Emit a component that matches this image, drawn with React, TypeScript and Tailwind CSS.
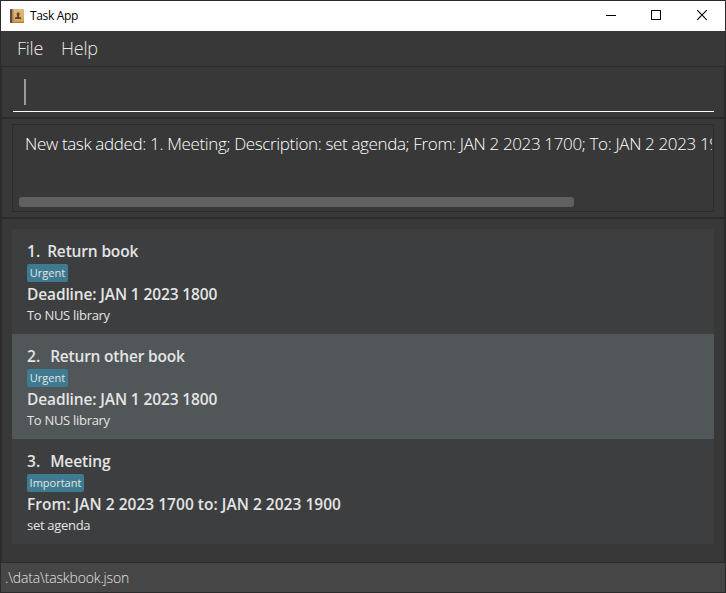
import React from "react";

type Task = {
  index: number;
  title: string;
  titleClass: string;
  tag: string;
  tagClass: string;
  time: string;
  timeClass: string;
  note: string;
  selected?: boolean;
};

const tasks: Task[] = [
  { index: 1, title: "Return book", titleClass: "ml-[7px] tracking-[-0.16px]", tag: "Urgent", tagClass: "w-[41px]", time: "Deadline: JAN 1 2023 1800", timeClass: "tracking-[-0.13px]", note: "To NUS library" },
  { index: 2, title: "Return other book", titleClass: "ml-[10px] tracking-[-0.2px]", tag: "Urgent", tagClass: "w-[41px]", time: "Deadline: JAN 1 2023 1800", timeClass: "tracking-[-0.13px]", note: "To NUS library", selected: true },
  { index: 3, title: "Meeting", titleClass: "ml-[10px] tracking-[-0.1px]", tag: "Important", tagClass: "w-[57px]", time: "From: JAN 2 2023 1700 to: JAN 2 2023 1900", timeClass: "tracking-[0.02px]", note: "set agenda" },
];

function BookIcon() {
  return (
    <svg width="14" height="14" viewBox="0 0 14 14" className="mb-px block">
      <defs>
        <linearGradient id="cover" x1="0" y1="0" x2="0" y2="1">
          <stop offset="0" stopColor="#e0b982" />
          <stop offset="1" stopColor="#d8a452" />
        </linearGradient>
      </defs>
      <rect width="14" height="14" rx="1" fill="url(#cover)" />
      <rect width="2.200" height="14" rx="0.6" fill="#5b4a42" />
      <rect x="2.200" width="1.300" height="14" fill="#a58056" />
      <rect x="3" y="12.700" width="11" height="1.300" fill="#b37b35" />
      <path d="M8.200 3.500c1 0 1.500.7 1.500 1.600 0 .8-.3 1.300-.7 1.700v.9l2 .7V10H5V8.400l2.200-.7v-.9c-.4-.4-.6-.9-.6-1.700 0-.9.6-1.600 1.600-1.600z" fill="#5d4630" />
    </svg>
  );
}

function TitleBar() {
  return (
    <header className="flex h-[30px] shrink-0 items-center bg-white pl-[9px] text-black">
      <BookIcon />
      <span className="ml-[6px] text-[12px] leading-[30px] tracking-[-0.35px]">Task App</span>
      <svg width="102" height="12" viewBox="0 0 102 12" className="ml-auto mr-[17px] mb-[2px]" fill="none" stroke="#000" shapeRendering="crispEdges">
        <path d="M0 6.500h10" />
        <rect x="45.500" y="1.500" width="9" height="9" />
        <path d="M91.200 1.200l9.600 9.600M100.800 1.200l-9.600 9.600" shapeRendering="auto" strokeWidth="1.100" />
      </svg>
    </header>
  );
}

function TaskCard({ task }: { task: Task }) {
  return (
    <li className={`flex h-[105px] flex-col items-start pl-[15px] pt-[11px] text-[#e4e4e4] ${task.selected ? "bg-[#515658]" : "bg-[#3c3e3f]"}`}>
      <div className="flex h-[22px] items-center text-[15.5px] font-semibold leading-[22px]">
        <span>{task.index}.</span>
        <span className={task.titleClass}>{task.title}</span>
      </div>
      <span className={`mt-[2px] flex h-[18px] items-center justify-center rounded-[2px] bg-[#3e7b91] text-[11px] leading-[18px] whitespace-nowrap ${task.tagClass}`}>{task.tag}</span>
      <p className={`mt-px h-[22px] text-[15.5px] font-semibold leading-[22px] whitespace-nowrap ${task.timeClass}`}>{task.time}</p>
      <p className="h-[20px] text-[13px] leading-[20px] tracking-[-0.3px] whitespace-nowrap">{task.note}</p>
    </li>
  );
}

export default function App() {
  return (
    <div className="flex h-[593px] w-[726px] flex-col overflow-hidden border border-[#2b2b2b] bg-[#383838] font-['Open_Sans','Noto_Sans',sans-serif]">
      <TitleBar />
      <nav className="flex h-[35px] shrink-0 gap-[18px] pl-4 text-[18px] font-light leading-[35px] tracking-[-0.25px] text-[#e8e8e8]">
        <span>File</span>
        <span>Help</span>
      </nav>
      <main className="flex flex-1 flex-col border-x border-t border-[#2b2b2b]">
        <section className="h-[50px] shrink-0 pl-[11px] pr-[10px] pt-[4px]">
          <div className="flex h-[41px] items-center border-b border-white pl-[11px]">
            <span className="mt-px h-[26px] w-[2px] bg-[#9a9a9a]" />
          </div>
        </section>
        <section className="h-[102px] shrink-0 border-y-2 border-[#2b2b2b] px-[10px] py-[5px]">
          <div className="flex h-[88px] flex-col overflow-hidden border border-[#2b2b2b] pl-[6px] pr-px">
            <p className="h-[38px] overflow-hidden pl-[6px] text-[17px] font-light leading-[38px] tracking-[-0.355px] whitespace-nowrap text-white">
              New task added: 1. Meeting; Description: set agenda; From: JAN 2 2023 1700; To: JAN 2 2023 1900
            </p>
            <div className="mt-[34px] h-[10px] w-[555px] rounded-[3px] bg-[#606060]" />
          </div>
        </section>
        <ul className="flex flex-col px-[10px] pt-[10px]">
          {tasks.map((task) => (
            <TaskCard key={task.index} task={task} />
          ))}
        </ul>
      </main>
      <footer className="h-[30px] shrink-0 border-t border-[#2b2b2b] bg-[#464646] pl-[4px] text-[14px] font-light leading-[29px] tracking-[-0.15px] text-[#e4e4e4]">
        .\data\taskbook.json
      </footer>
    </div>
  );
}
